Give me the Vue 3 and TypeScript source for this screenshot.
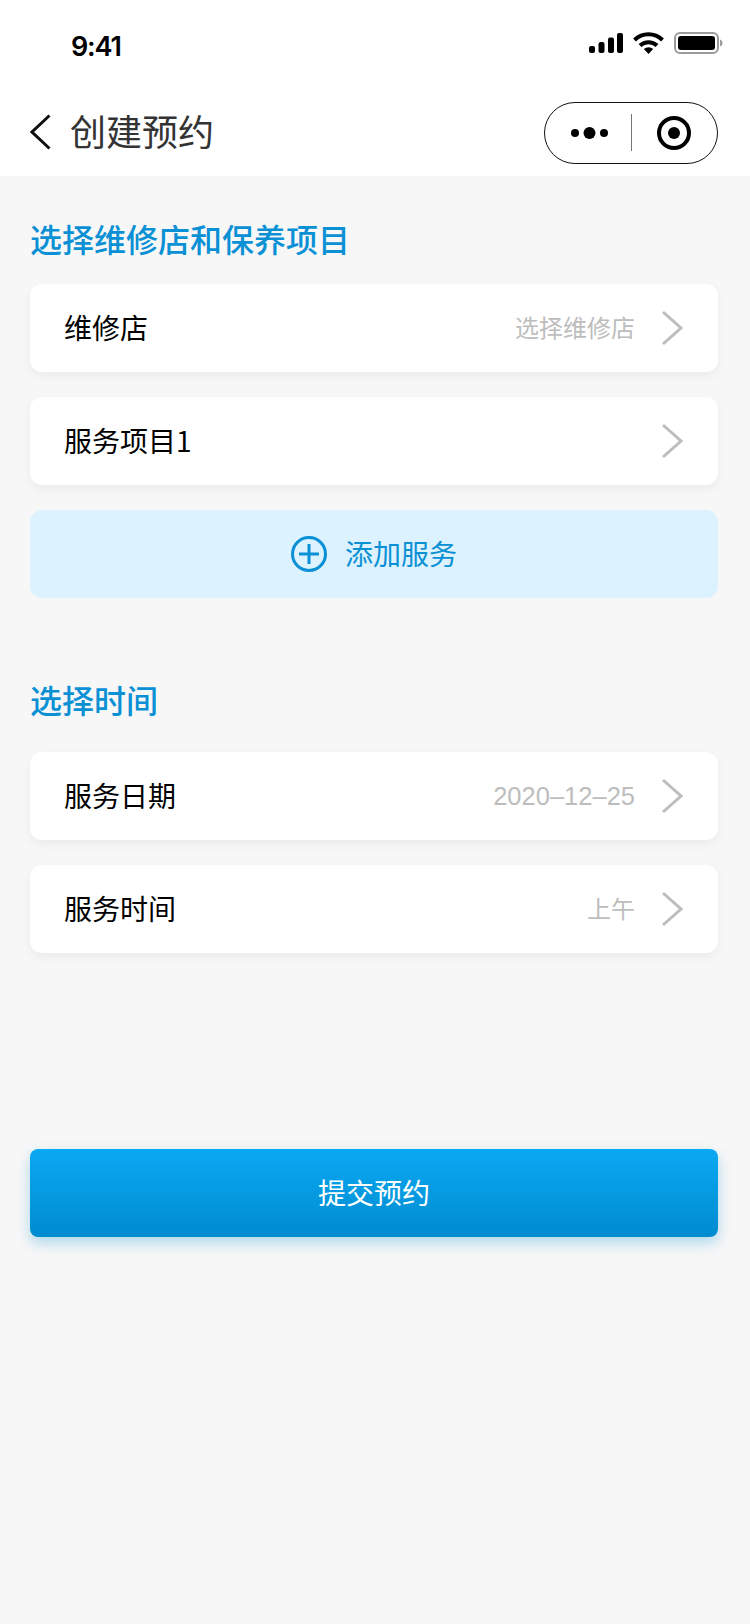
<script setup lang="ts">
interface Row {
  label: string;
  value?: string;
  latin?: boolean;
}

const shopRows: Row[] = [
  { label: '维修店', value: '选择维修店' },
  { label: '服务项目1' },
];

const timeRows: Row[] = [
  { label: '服务日期', value: '2020–12–25', latin: true },
  { label: '服务时间', value: '上午' },
];
</script>

<template>
  <div class="page">
    <header class="top">
      <div class="status">
        <span class="clock">9:41</span>
        <div class="status-icons">
          <svg width="34" height="20" viewBox="0 0 34 20">
            <rect x="0" y="13" width="6" height="7" rx="2" />
            <rect x="9.500" y="9" width="6" height="11" rx="2" />
            <rect x="19" y="4.500" width="6" height="15.500" rx="2" />
            <rect x="28" y="0" width="6" height="20" rx="2" />
          </svg>
          <svg width="31" height="22" viewBox="0 0 31 22">
            <path d="M1.500 8a20 20 0 0 1 28 0" fill="none" stroke="#000" stroke-width="4" />
            <path d="M7 13.500a12.500 12.500 0 0 1 17 0" fill="none" stroke="#000" stroke-width="4" />
            <path d="M10.800 17a7 7 0 0 1 9.400 0L15.500 22z" />
          </svg>
          <svg width="49" height="22" viewBox="0 0 49 22">
            <rect x="1" y="1" width="43" height="20" rx="5" fill="none" stroke="#9b9b9b" stroke-width="2" />
            <rect x="4" y="4" width="37" height="14" rx="3" />
            <path d="M46 7.500v7c1.500-.5 2.500-2 2.500-3.500s-1-3-2.500-3.500z" fill="#9b9b9b" />
          </svg>
        </div>
      </div>
      <div class="nav">
        <svg class="back" width="22" height="36" viewBox="0 0 22 36">
          <path d="M19.500 1.500 2 18l17.500 16.500" fill="none" stroke="#111" stroke-width="3" />
        </svg>
        <h1 class="nav-title">创建预约</h1>
        <div class="capsule">
          <svg width="37" height="14" viewBox="0 0 37 14">
            <circle cx="4" cy="7" r="4" />
            <circle cx="18.500" cy="7" r="6" />
            <circle cx="33" cy="7" r="4" />
          </svg>
          <span class="capsule-line"></span>
          <svg width="34" height="34" viewBox="0 0 34 34">
            <circle cx="17" cy="17" r="15" fill="none" stroke="#000" stroke-width="4" />
            <circle cx="17" cy="17" r="6" />
          </svg>
        </div>
      </div>
    </header>

    <main class="content">
      <section class="group">
        <h2 class="group-title">选择维修店和保养项目</h2>
        <div v-for="row in shopRows" :key="row.label" class="row">
          <span class="row-label">{{ row.label }}</span>
          <span v-if="row.value" class="row-value">{{ row.value }}</span>
          <svg class="chevron" width="22" height="36" viewBox="0 0 22 36">
            <path d="M2 2l18 16L2 34" fill="none" stroke="#bdbdbd" stroke-width="3" />
          </svg>
        </div>
        <div class="add">
          <svg width="36" height="36" viewBox="0 0 36 36">
            <circle cx="18" cy="18" r="16.500" fill="none" stroke="#0a90d5" stroke-width="3" />
            <path d="M18 8v20M8 18h20" fill="none" stroke="#0a90d5" stroke-width="3" />
          </svg>
          <span class="add-text">添加服务</span>
        </div>
      </section>

      <section class="group group-time">
        <h2 class="group-title">选择时间</h2>
        <div v-for="row in timeRows" :key="row.label" class="row">
          <span class="row-label">{{ row.label }}</span>
          <span v-if="row.value" class="row-value" :class="{ latin: row.latin }">{{ row.value }}</span>
          <svg class="chevron" width="22" height="36" viewBox="0 0 22 36">
            <path d="M2 2l18 16L2 34" fill="none" stroke="#bdbdbd" stroke-width="3" />
          </svg>
        </div>
      </section>

      <button class="submit" type="button">提交预约</button>
    </main>
  </div>
</template>

<style scoped>
.page {
  display: flex;
  flex-direction: column;
  height: 1624px;
  background: #f7f7f7;
  font-family: "Noto Sans CJK SC", "Noto Sans", sans-serif;
}

.top {
  height: 176px;
  background: #fff;
}

.status {
  display: flex;
  align-items: center;
  justify-content: space-between;
  height: 88px;
  padding: 4px 27px 0 71px;
  box-sizing: border-box;
}

.clock {
  font-family: Inter, "Liberation Sans", sans-serif;
  font-size: 27px;
  font-weight: 600;
  letter-spacing: -1.200px;
  color: #000;
}

.status-icons {
  display: flex;
  align-items: center;
  gap: 10px;
  margin-bottom: 6px;
}

.nav {
  display: flex;
  align-items: center;
  height: 88px;
  padding: 0 32px 0 30px;
}

.back {
  flex: none;
}

.nav-title {
  flex: 1;
  margin: 0 0 4px 18px;
  font-size: 36px;
  font-weight: 400;
  line-height: 44px;
  color: #333;
}

.capsule {
  display: flex;
  align-items: center;
  box-sizing: border-box;
  width: 174px;
  height: 62px;
  margin-top: 1px;
  padding: 0 14px 0 26px;
  border: 1.500px solid #111;
  border-radius: 31px;
}

.capsule-line {
  width: 1px;
  height: 37px;
  margin: 0 25px 0 23px;
  background: #777;
}

.content {
  display: flex;
  flex-direction: column;
  padding: 0 32px 0 30px;
}

.group {
  display: flex;
  flex-direction: column;
  gap: 25px;
}

.group-title {
  height: 43px;
  margin: 40px 0 0;
  font-size: 32px;
  font-weight: 500;
  line-height: 44px;
  color: #0a90d5;
}

.group-time {
  margin-top: 61px;
}

.group-time .group-title {
  height: 50px;
  margin-top: 18px;
}

.row {
  display: flex;
  align-items: center;
  height: 88px;
  padding: 0 35px 0 34px;
  background: #fff;
  border-radius: 12px;
  box-shadow: 0 4px 10px rgba(0, 0, 0, 0.05);
}

.row-label {
  flex: 1;
  padding-bottom: 2px;
  font-size: 28px;
  color: #000;
}

.row-value {
  margin-right: 26px;
  padding-bottom: 4px;
  font-size: 24px;
  color: #bdbdbd;
}

.row-value.latin {
  padding-bottom: 0;
  font-family: "Liberation Sans", sans-serif;
  font-size: 25.500px;
}

.chevron {
  flex: none;
}

.add {
  display: flex;
  align-items: center;
  justify-content: center;
  gap: 18px;
  height: 88px;
  font-size: 28px;
  color: #0a90d5;
  background: #dcf2fe;
  border-radius: 12px;
}

.add-text {
  padding-bottom: 2px;
}

.submit {
  height: 88px;
  margin-top: 196px;
  padding: 0 0 3px;
  font: inherit;
  font-size: 28px;
  color: #fff;
  background: linear-gradient(180deg, #0ba9f3 0%, #008bcf 100%);
  border: 0;
  border-radius: 8px;
  box-shadow: 0 6px 14px rgba(8, 145, 215, 0.3);
}
</style>
